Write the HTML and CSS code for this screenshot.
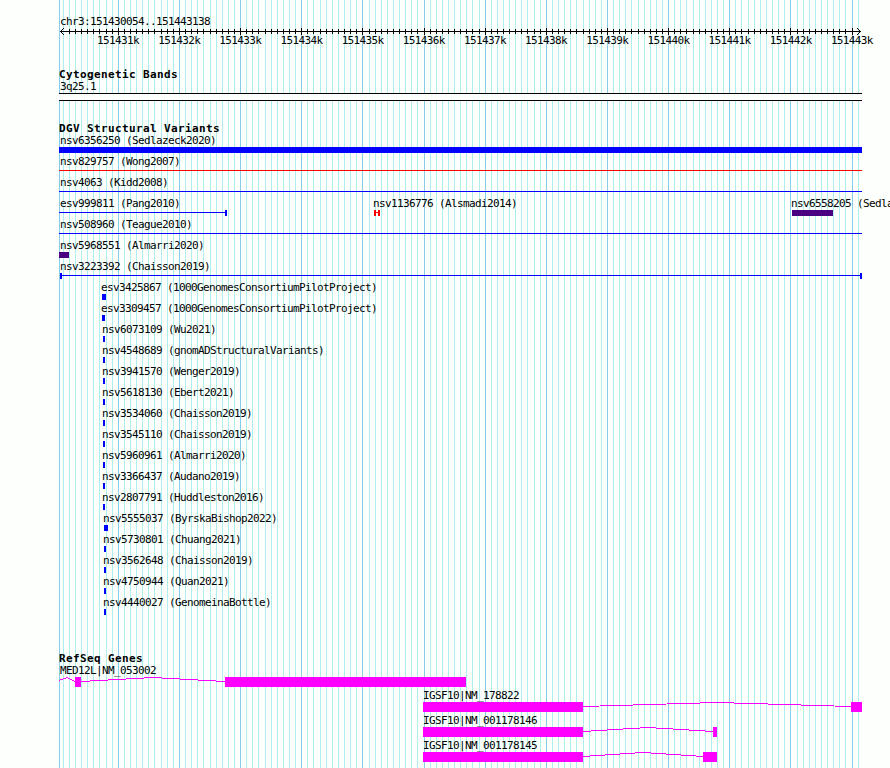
FILE: index.html
```html
<!DOCTYPE html>
<html lang="en">
<head>
<meta charset="utf-8">
<title>chr3:151430054..151443138</title>
<link rel="stylesheet" href="styles.css">
</head>
<body>
<main class="browser">
  <svg class="grid" width="890" height="768" aria-hidden="true"></svg>

  <header class="ruler">
    <div class="label">chr3:151430054..151443138</div>
    <svg class="axis" width="890" height="9" aria-hidden="true"></svg>
    <div class="positions">
      <span>151431k</span><span>151432k</span><span>151433k</span><span>151434k</span><span>151435k</span><span>151436k</span><span>151437k</span><span>151438k</span><span>151439k</span><span>151440k</span><span>151441k</span><span>151442k</span><span>151443k</span>
    </div>
  </header>

  <section class="track bands">
    <h2>Cytogenetic Bands</h2>
    <div class="label">3q25.1</div>
    <div class="band"></div>
  </section>

  <section class="track variants">
    <h2>DGV Structural Variants</h2>
    <div class="row"><div class="feature"><div class="label">nsv6356250 (Sedlazeck2020)</div><div class="mark bar" style="--x:59px;--w:803px"></div></div></div>
    <div class="row"><div class="feature"><div class="label">nsv829757 (Wong2007)</div><div class="mark line red" style="--x:59px;--w:803px"></div></div></div>
    <div class="row"><div class="feature"><div class="label">nsv4063 (Kidd2008)</div><div class="mark line" style="--x:59px;--w:803px"></div></div></div>
    <div class="row">
      <div class="feature"><div class="label">esv999811 (Pang2010)</div><div class="mark line cap-end" style="--x:59px;--w:168px"></div></div>
      <div class="feature"><div class="label" style="--l:373px">nsv1136776 (Alsmadi2014)</div><div class="mark line cap-start cap-end red" style="--x:374px;--w:6px"></div></div>
      <div class="feature"><div class="label" style="--l:791px">nsv6558205 (Sedlazeck2020)</div><div class="mark bar indigo" style="--x:792px;--w:41px"></div></div>
    </div>
    <div class="row"><div class="feature"><div class="label">nsv508960 (Teague2010)</div><div class="mark line" style="--x:59px;--w:803px"></div></div></div>
    <div class="row"><div class="feature"><div class="label">nsv5968551 (Almarri2020)</div><div class="mark bar indigo" style="--x:59px;--w:10px"></div></div></div>
    <div class="row"><div class="feature"><div class="label">nsv3223392 (Chaisson2019)</div><div class="mark line cap-start cap-end" style="--x:60px;--w:802px"></div></div></div>
    <div class="row"><div class="feature"><div class="label" style="--l:101px">esv3425867 (1000GenomesConsortiumPilotProject)</div><div class="mark bar" style="--x:102px;--w:4px"></div></div></div>
    <div class="row"><div class="feature"><div class="label" style="--l:101px">esv3309457 (1000GenomesConsortiumPilotProject)</div><div class="mark bar" style="--x:102px;--w:3px"></div></div></div>
    <div class="row"><div class="feature"><div class="label" style="--l:102px">nsv6073109 (Wu2021)</div><div class="mark bar" style="--x:103px;--w:2px"></div></div></div>
    <div class="row"><div class="feature"><div class="label" style="--l:102px">nsv4548689 (gnomADStructuralVariants)</div><div class="mark bar" style="--x:103px;--w:2px"></div></div></div>
    <div class="row"><div class="feature"><div class="label" style="--l:102px">nsv3941570 (Wenger2019)</div><div class="mark bar" style="--x:103px;--w:2px"></div></div></div>
    <div class="row"><div class="feature"><div class="label" style="--l:102px">nsv5618130 (Ebert2021)</div><div class="mark bar" style="--x:103px;--w:2px"></div></div></div>
    <div class="row"><div class="feature"><div class="label" style="--l:102px">nsv3534060 (Chaisson2019)</div><div class="mark bar" style="--x:103px;--w:2px"></div></div></div>
    <div class="row"><div class="feature"><div class="label" style="--l:102px">nsv3545110 (Chaisson2019)</div><div class="mark bar" style="--x:103px;--w:2px"></div></div></div>
    <div class="row"><div class="feature"><div class="label" style="--l:102px">nsv5960961 (Almarri2020)</div><div class="mark bar" style="--x:103px;--w:2px"></div></div></div>
    <div class="row"><div class="feature"><div class="label" style="--l:102px">nsv3366437 (Audano2019)</div><div class="mark bar" style="--x:103px;--w:2px"></div></div></div>
    <div class="row"><div class="feature"><div class="label" style="--l:102px">nsv2807791 (Huddleston2016)</div><div class="mark bar" style="--x:103px;--w:2px"></div></div></div>
    <div class="row"><div class="feature"><div class="label" style="--l:103px">nsv5555037 (ByrskaBishop2022)</div><div class="mark bar" style="--x:104px;--w:4px"></div></div></div>
    <div class="row"><div class="feature"><div class="label" style="--l:103px">nsv5730801 (Chuang2021)</div><div class="mark bar" style="--x:104px;--w:2px"></div></div></div>
    <div class="row"><div class="feature"><div class="label" style="--l:103px">nsv3562648 (Chaisson2019)</div><div class="mark bar" style="--x:104px;--w:2px"></div></div></div>
    <div class="row"><div class="feature"><div class="label" style="--l:103px">nsv4750944 (Quan2021)</div><div class="mark bar" style="--x:104px;--w:2px"></div></div></div>
    <div class="row"><div class="feature"><div class="label" style="--l:103px">nsv4440027 (GenomeinaBottle)</div><div class="mark bar" style="--x:104px;--w:2px"></div></div></div>
  </section>

  <section class="track genes">
    <h2>RefSeq Genes</h2>
    <div class="gene">
      <div class="label">MED12L|NM_053002</div>
      <svg width="890" height="10"><path class="intron" d="M59 3.5L67 .5L75 4.5M81 4.5L153 .5L225 4.5"/><path class="exon" d="M75 0h6v10h-6zM225 0h241v10h-241z"/></svg>
    </div>
    <div class="gene">
      <div class="label" style="--l:423px">IGSF10|NM_178822</div>
      <svg width="890" height="10"><path class="intron" d="M583 4.5L717 .5L851 4.5"/><path class="exon" d="M423 0h160v10h-160zM851 0h11v10h-11z"/></svg>
    </div>
    <div class="gene">
      <div class="label" style="--l:423px">IGSF10|NM_001178146</div>
      <svg width="890" height="10"><path class="intron" d="M583 4.5L648 .5L713 4.5"/><path class="exon" d="M423 0h160v10h-160zM713 0h4v10h-4z"/></svg>
    </div>
    <div class="gene">
      <div class="label" style="--l:423px">IGSF10|NM_001178145</div>
      <svg width="890" height="10"><path class="intron" d="M583 4.5L643 .5L703 4.5"/><path class="exon" d="M423 0h160v10h-160zM703 0h14v10h-14z"/></svg>
    </div>
  </section>
</main>
<script src="ruler.js"></script>
</body>
</html>
```

FILE: styles.css
```css
* {
  box-sizing: border-box;
}

body {
  margin: 0;
  background: #fdfffc;
  color: #000;
  font: 11px/13px "DejaVu Sans Mono", monospace;
}

.browser {
  position: relative;
  width: 890px;
  height: 768px;
  overflow: hidden;
  isolation: isolate;
}

svg {
  display: block;
  shape-rendering: crispEdges;
}

.grid {
  position: absolute;
  inset: 0;
  z-index: -1;
}

.minor { fill: #afeeee; }
.major { fill: #87ceeb; }

.label {
  height: 13px;
  margin-left: var(--l, 60px);
  letter-spacing: -0.6226px;
  white-space: nowrap;
}

.ruler {
  height: 67px;
  padding-top: 15px;
}

.axis {
  margin-top: -1px;
}

.positions {
  display: flex;
  justify-content: space-between;
  width: 776px;
  margin: -2px 0 0 97px;
  letter-spacing: -0.6226px;
}

.positions span {
  width: 42px;
  white-space: nowrap;
}

h2 {
  height: 12px;
  margin: 0 0 0 59px;
  font-size: 11px;
  line-height: 13px;
  letter-spacing: 0.3774px;
}

.bands {
  height: 55px;
  padding-top: 1px;
}

.band {
  width: 803px;
  height: 8px;
  margin-left: 59px;
  border: solid #000;
  border-width: 1px 0;
  background: #fdfffc;
}

.variants {
  height: 530px;
}

.row {
  display: grid;
  height: 21px;
}

.feature {
  grid-area: 1 / 1;
  min-width: 0;
}

.mark {
  width: var(--w);
  height: 6px;
  margin-left: var(--x);
  color: #00f;
}

.bar { background: currentColor; }

.line {
  background: linear-gradient(currentColor, currentColor) 0 2px / 100% 1px no-repeat;
}

.cap-start { border-left: 2px solid; }
.cap-end { border-right: 2px solid; }
.red { color: #f00; }
.indigo { color: #4b0082; }

.gene {
  height: 25px;
}

.exon { fill: #f0f; }

.intron {
  fill: none;
  stroke: #f0f;
}
```

FILE: ruler.js
```js
// Grid lines and ruler ticks, one for every 100 bases.
const NS = "http://www.w3.org/2000/svg";
const grid = document.querySelector(".grid");
const axis = document.querySelector(".axis");

function rect(parent, x, y, w, h, name) {
  const r = document.createElementNS(NS, "rect");
  r.setAttribute("x", x);
  r.setAttribute("y", y);
  r.setAttribute("width", w);
  r.setAttribute("height", h);
  if (name) r.setAttribute("class", name);
  parent.appendChild(r);
}

rect(grid, 59, 0, 1, 768, "major");
rect(axis, 60, 4, 801, 1);
for (let k = -9; k <= 121; k++) {
  const x = Math.floor(118.3 + 6.1147 * k);
  const major = k % 10 === 0;
  rect(grid, x, 0, 1, 768, major ? "major" : "minor");
  // The outermost ticks give way to the arrowheads.
  if (k > -9 && k < 121) rect(axis, x, major ? 1 : 2, 1, major ? 7 : 5);
}
for (let i = 1; i < 4; i++) {
  for (const y of [4 - i, 4 + i]) {
    rect(axis, 60 + i, y, 1, 1);
    rect(axis, 860 - i, y, 1, 1);
  }
}
```
